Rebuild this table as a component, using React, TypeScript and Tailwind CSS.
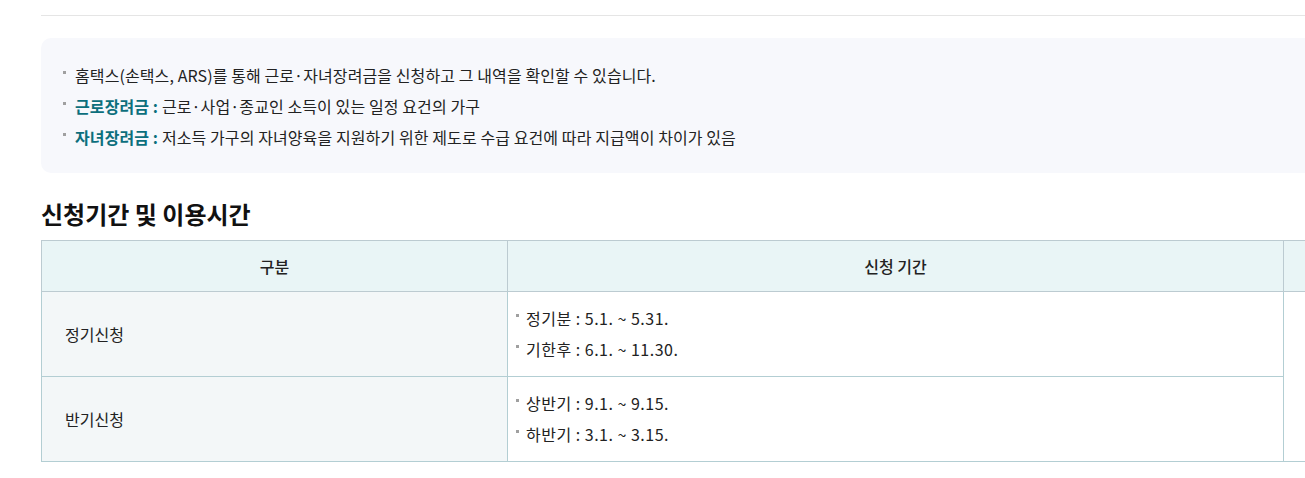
const font = { fontFamily: '"Noto Sans CJK KR", "Noto Sans", sans-serif' };

function Bullet({ children, gap = "pl-[12px]" }: { children: React.ReactNode; gap?: string }) {
  return (
    <li className={`relative leading-[31px] ${gap}`}>
      <span className="absolute left-0 top-[11px] h-[3px] w-[3px] bg-[#a0a0a0]" />
      {children}
    </li>
  );
}

export default function App() {
  return (
    <div className="w-[1305px] h-[478px] overflow-hidden bg-white text-[#222]" style={font}>
      <div className="w-[1500px] pl-[41px]">
        <div className="h-[16px] border-b border-[#e5e5e5]" />

        <div className="mt-[22px] rounded-[10px] bg-[#f7f8fc] px-[22px] pt-[22px] pb-[20px]">
          <ul className="text-[16px] tracking-[0.1px]">
            <Bullet>홈택스(손택스, ARS)를 통해 근로·자녀장려금을 신청하고 그 내역을 확인할 수 있습니다.</Bullet>
            <Bullet>
              <strong className="font-bold text-[#0c6f7c]">근로장려금 : </strong>근로·사업·종교인 소득이 있는 일정 요건의 가구
            </Bullet>
            <Bullet>
              <strong className="font-bold text-[#0c6f7c]">자녀장려금 : </strong>저소득 가구의 자녀양육을 지원하기 위한 제도로 수급 요건에 따라 지급액이 차이가 있음
            </Bullet>
          </ul>
        </div>

        <h3 className="mt-[27px] mb-[12px] text-[24px] font-bold leading-[28px] text-[#111]">
          신청기간 및 이용시간
        </h3>

        <table className="w-[1459px] table-fixed border-collapse text-[16px]">
          <colgroup>
            <col className="w-[466px]" />
            <col className="w-[776px]" />
            <col />
          </colgroup>
          <thead>
            <tr className="h-[51px] bg-[#e9f5f6]">
              <th className="border border-[#bccbd1] font-medium">구분</th>
              <th className="border border-[#bccbd1] font-medium">신청 기간</th>
              <th className="border border-[#bccbd1] font-medium" />
            </tr>
          </thead>
          <tbody>
            <tr className="h-[85px]">
              <td className="border border-[#b3ced3] bg-[#f3f7f8] pl-[23px]">정기신청</td>
              <td className="border border-[#b3ced3] px-[8px] py-[10px] tracking-[0.5px]">
                <ul>
                  <Bullet gap="pl-[10px]">정기분 : 5.1. ~ 5.31.</Bullet>
                  <Bullet gap="pl-[10px]">기한후 : 6.1. ~ 11.30.</Bullet>
                </ul>
              </td>
              <td rowSpan={2} className="border border-[#b3ced3]" />
            </tr>
            <tr className="h-[85px]">
              <td className="border border-[#b3ced3] bg-[#f3f7f8] pl-[23px]">반기신청</td>
              <td className="border border-[#b3ced3] px-[8px] py-[10px] tracking-[0.5px]">
                <ul>
                  <Bullet gap="pl-[10px]">상반기 : 9.1. ~ 9.15.</Bullet>
                  <Bullet gap="pl-[10px]">하반기 : 3.1. ~ 3.15.</Bullet>
                </ul>
              </td>
            </tr>
          </tbody>
        </table>
      </div>
    </div>
  );
}
